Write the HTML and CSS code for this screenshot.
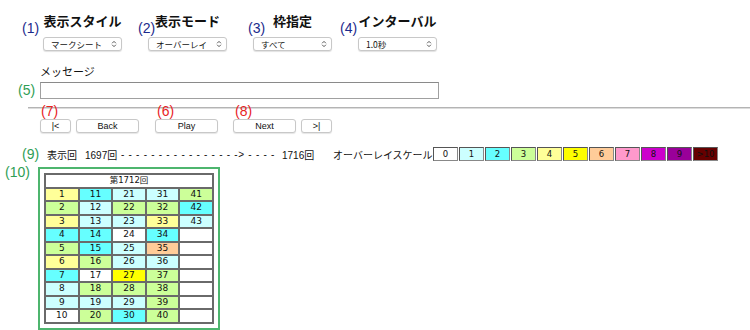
FILE: index.html
```html
<!DOCTYPE html>
<html lang="ja">
<head>
    <meta charset="UTF-8">
    <title>ビンゴ表示</title>
    <link rel="stylesheet" href="styles.css">
</head>
<body>
    <div class="controls">
        <div class="field">
            <span class="mark blue m1">(1)</span>
            <div class="field-title">表示スタイル</div>
            <div class="select"><span>マークシート</span><svg viewBox="0 0 8 10"><path d="M1.5 4L4 1.5 6.5 4M1.5 6L4 8.5 6.5 6"/></svg></div>
        </div>
        <div class="field">
            <span class="mark blue m2">(2)</span>
            <div class="field-title">表示モード</div>
            <div class="select"><span>オーバーレイ</span><svg viewBox="0 0 8 10"><path d="M1.5 4L4 1.5 6.5 4M1.5 6L4 8.5 6.5 6"/></svg></div>
        </div>
        <div class="field">
            <span class="mark blue m3">(3)</span>
            <div class="field-title">枠指定</div>
            <div class="select"><span>すべて</span><svg viewBox="0 0 8 10"><path d="M1.5 4L4 1.5 6.5 4M1.5 6L4 8.5 6.5 6"/></svg></div>
        </div>
        <div class="field">
            <span class="mark blue m4">(4)</span>
            <div class="field-title">インターバル</div>
            <div class="select"><span>1.0秒</span><svg viewBox="0 0 8 10"><path d="M1.5 4L4 1.5 6.5 4M1.5 6L4 8.5 6.5 6"/></svg></div>
        </div>
    </div>

    <div class="message">
        <div class="message-label">メッセージ</div>
        <div class="message-row">
            <span class="mark green m5">(5)</span>
            <input type="text" class="message-input">
        </div>
    </div>

    <hr class="divider">

    <div class="nav">
        <button class="btn btn-small"><span class="mark red m7">(7)</span>|&lt;</button>
        <button class="btn">Back</button>
        <button class="btn btn-play"><span class="mark red m6">(6)</span>Play</button>
        <button class="btn btn-next"><span class="mark red m8">(8)</span>Next</button>
        <button class="btn btn-small">&gt;|</button>
    </div>

    <div class="range">
        <span class="mark green m9">(9)</span>
        <span class="range-label">表示回</span>
        <span class="range-from">1697回</span>
        <span class="range-dash">- - - - - - - - - - - - - - - -&gt; - - - -</span>
        <span class="range-to">1716回</span>
        <span class="scale-label">オーバーレイスケール</span>
        <div class="scale">
            <span class="c0">0</span>
            <span class="c1">1</span>
            <span class="c2">2</span>
            <span class="c3">3</span>
            <span class="c4">4</span>
            <span class="c5">5</span>
            <span class="c6">6</span>
            <span class="c7">7</span>
            <span class="c8">8</span>
            <span class="c9">9</span>
            <span class="c10">&gt;10</span>
        </div>
    </div>

    <div class="sheet-area">
        <span class="mark green m10">(10)</span>
        <div class="sheet-box">
            <table class="sheet">
                <tr><th colspan="5">第1712回</th></tr>
                <tr><td class="c4">1</td><td class="c2">11</td><td class="c1">21</td><td class="c1">31</td><td class="c3">41</td></tr>
                <tr><td class="c3">2</td><td class="c1">12</td><td class="c3">22</td><td class="c3">32</td><td class="c2">42</td></tr>
                <tr><td class="c4">3</td><td class="c1">13</td><td class="c1">23</td><td class="c4">33</td><td class="c1">43</td></tr>
                <tr><td class="c2">4</td><td class="c2">14</td><td class="c0">24</td><td class="c2">34</td><td class="c0"></td></tr>
                <tr><td class="c3">5</td><td class="c2">15</td><td class="c1">25</td><td class="c6">35</td><td class="c0"></td></tr>
                <tr><td class="c4">6</td><td class="c3">16</td><td class="c1">26</td><td class="c1">36</td><td class="c0"></td></tr>
                <tr><td class="c2">7</td><td class="c0">17</td><td class="c5">27</td><td class="c3">37</td><td class="c0"></td></tr>
                <tr><td class="c1">8</td><td class="c3">18</td><td class="c3">28</td><td class="c3">38</td><td class="c0"></td></tr>
                <tr><td class="c1">9</td><td class="c1">19</td><td class="c1">29</td><td class="c3">39</td><td class="c0"></td></tr>
                <tr><td class="c0">10</td><td class="c3">20</td><td class="c2">30</td><td class="c3">40</td><td class="c0"></td></tr>
            </table>
        </div>
    </div>
</body>
</html>
```

FILE: styles.css
```css
* {
    margin: 0;
    padding: 0;
    box-sizing: border-box;
}

body {
    font-family: "Liberation Sans", "Noto Sans CJK JP", sans-serif;
    color: #111;
    background: #fff;
    width: 750px;
    height: 330px;
    overflow: hidden;
}

/* annotation markers */
.mark {
    position: absolute;
    font-family: "Liberation Sans", "Noto Sans CJK JP", sans-serif;
    font-size: 14px;
    line-height: 16px;
    font-weight: normal;
    white-space: nowrap;
}

.blue { color: #1c2a8c; }
.green { color: #2f9e55; }
.red { color: #e8231f; }

.m1, .m2, .m3, .m4 {
    top: 9px;
    line-height: 14px;
}

.m1 { left: -21px; }
.m2 { left: -10px; }
.m3 { left: -5px; }
.m4 { left: -18px; }
.m5 { left: -22px; top: 0; }
.m6 { left: 1px; top: -17px; }
.m7 { left: 0; top: -17px; }
.m8 { left: 1px; top: -17px; }
.m9 { left: 22px; top: -1px; }
.m10 { left: 5px; top: 3px; }

/* top controls */
.controls {
    display: flex;
    gap: 26px;
    padding: 12px 0 0 43px;
}

.field {
    position: relative;
    width: 79px;
    text-align: center;
}

.field-title {
    font-family: "Noto Sans CJK JP", sans-serif;
    font-size: 13px;
    font-weight: 700;
    line-height: 18px;
    height: 18px;
    margin-bottom: 7px;
    white-space: nowrap;
}

.select {
    display: flex;
    align-items: center;
    justify-content: space-between;
    height: 14px;
    padding: 0 4px 0 7px;
    border: 1px solid #c8c8c8;
    border-radius: 3px;
    background: #fff;
    box-shadow: 0 1px 1px rgba(0, 0, 0, 0.12);
    font-family: "Noto Sans CJK JP", sans-serif;
    font-size: 8.5px;
    line-height: 12px;
    text-align: left;
}

.select svg {
    width: 6px;
    height: 8px;
    fill: none;
    stroke: #444;
    stroke-width: 1.2;
}

/* message */
.message {
    padding: 13px 0 0 40px;
}

.message-label {
    font-family: "Noto Sans CJK JP", sans-serif;
    font-size: 11px;
    line-height: 14px;
    margin-bottom: 4px;
}

.message-row {
    position: relative;
}

.message-input {
    display: block;
    width: 399px;
    height: 17px;
    border: 1px solid #a0a0a0;
    border-top-color: #8a8a8a;
    background: #fff;
}

.divider {
    margin: 8px 0 0 28px;
    border: none;
    border-top: 1px solid #b4b4b4;
    border-bottom: 1px solid #dcdcdc;
}

/* navigation buttons */
.nav {
    display: flex;
    padding: 10px 0 0 40px;
}

.btn {
    position: relative;
    width: 63px;
    height: 14px;
    margin-right: 5px;
    border: 1px solid #c8c8c8;
    border-radius: 3px;
    background: #fff;
    box-shadow: 0 1px 1px rgba(0, 0, 0, 0.1);
    font-family: "Liberation Sans", sans-serif;
    font-size: 9px;
    line-height: 12px;
    color: #111;
}

.btn-small {
    width: 31px;
}

.btn-play {
    margin-left: 11px;
    margin-right: 15px;
}

/* range row */
.range {
    position: relative;
    display: flex;
    align-items: center;
    height: 14px;
    margin-top: 14px;
    padding-left: 47px;
    font-family: "Liberation Sans", "Noto Sans CJK JP", sans-serif;
    font-size: 10px;
}

.range-label {
    width: 38px;
}

.range-from {
    width: 36px;
}

.range-dash {
    width: 161px;
    letter-spacing: 0.72px;
    white-space: nowrap;
    overflow: hidden;
}

.range-to {
    width: 51px;
}

.scale-label {
    width: 100px;
}

.scale {
    display: flex;
    gap: 1px;
}

.scale span {
    width: 25px;
    height: 14px;
    border: 1px solid #555;
    border-right-color: #888;
    border-bottom-color: #888;
    text-align: center;
    font-family: "DejaVu Sans", sans-serif;
    font-size: 8.5px;
    line-height: 12px;
}

/* overlay colours */
.c0 { background: #ffffff; }
.c1 { background: #ccffff; }
.c2 { background: #66ffff; }
.c3 { background: #ccff99; }
.c4 { background: #ffff99; }
.c5 { background: #ffff00; }
.c6 { background: #ffcc99; }
.c7 { background: #ff99cc; }
.c8 { background: #cc00cc; }
.c9 { background: #990099; }
.c10 { background: #660000; }

/* sheet */
.sheet-area {
    position: relative;
    padding: 6px 0 0 38px;
}

.sheet-box {
    display: inline-block;
    border: 2px solid #4db56e;
    padding: 4px;
}

.sheet {
    width: 170px;
    border-collapse: collapse;
    border: 2px solid #6a6a6a;
    font-family: "DejaVu Sans", sans-serif;
    font-size: 9px;
}

.sheet th,
.sheet td {
    height: 13.5px;
    border: 2px solid #6a6a6a;
    text-align: center;
    font-weight: normal;
    line-height: 9px;
    padding: 0;
}

.sheet th {
    background: #fff;
    font-size: 8.5px;
    font-family: "DejaVu Sans", "Noto Sans CJK JP", sans-serif;
}

.sheet td {
    width: 20%;
}
```
